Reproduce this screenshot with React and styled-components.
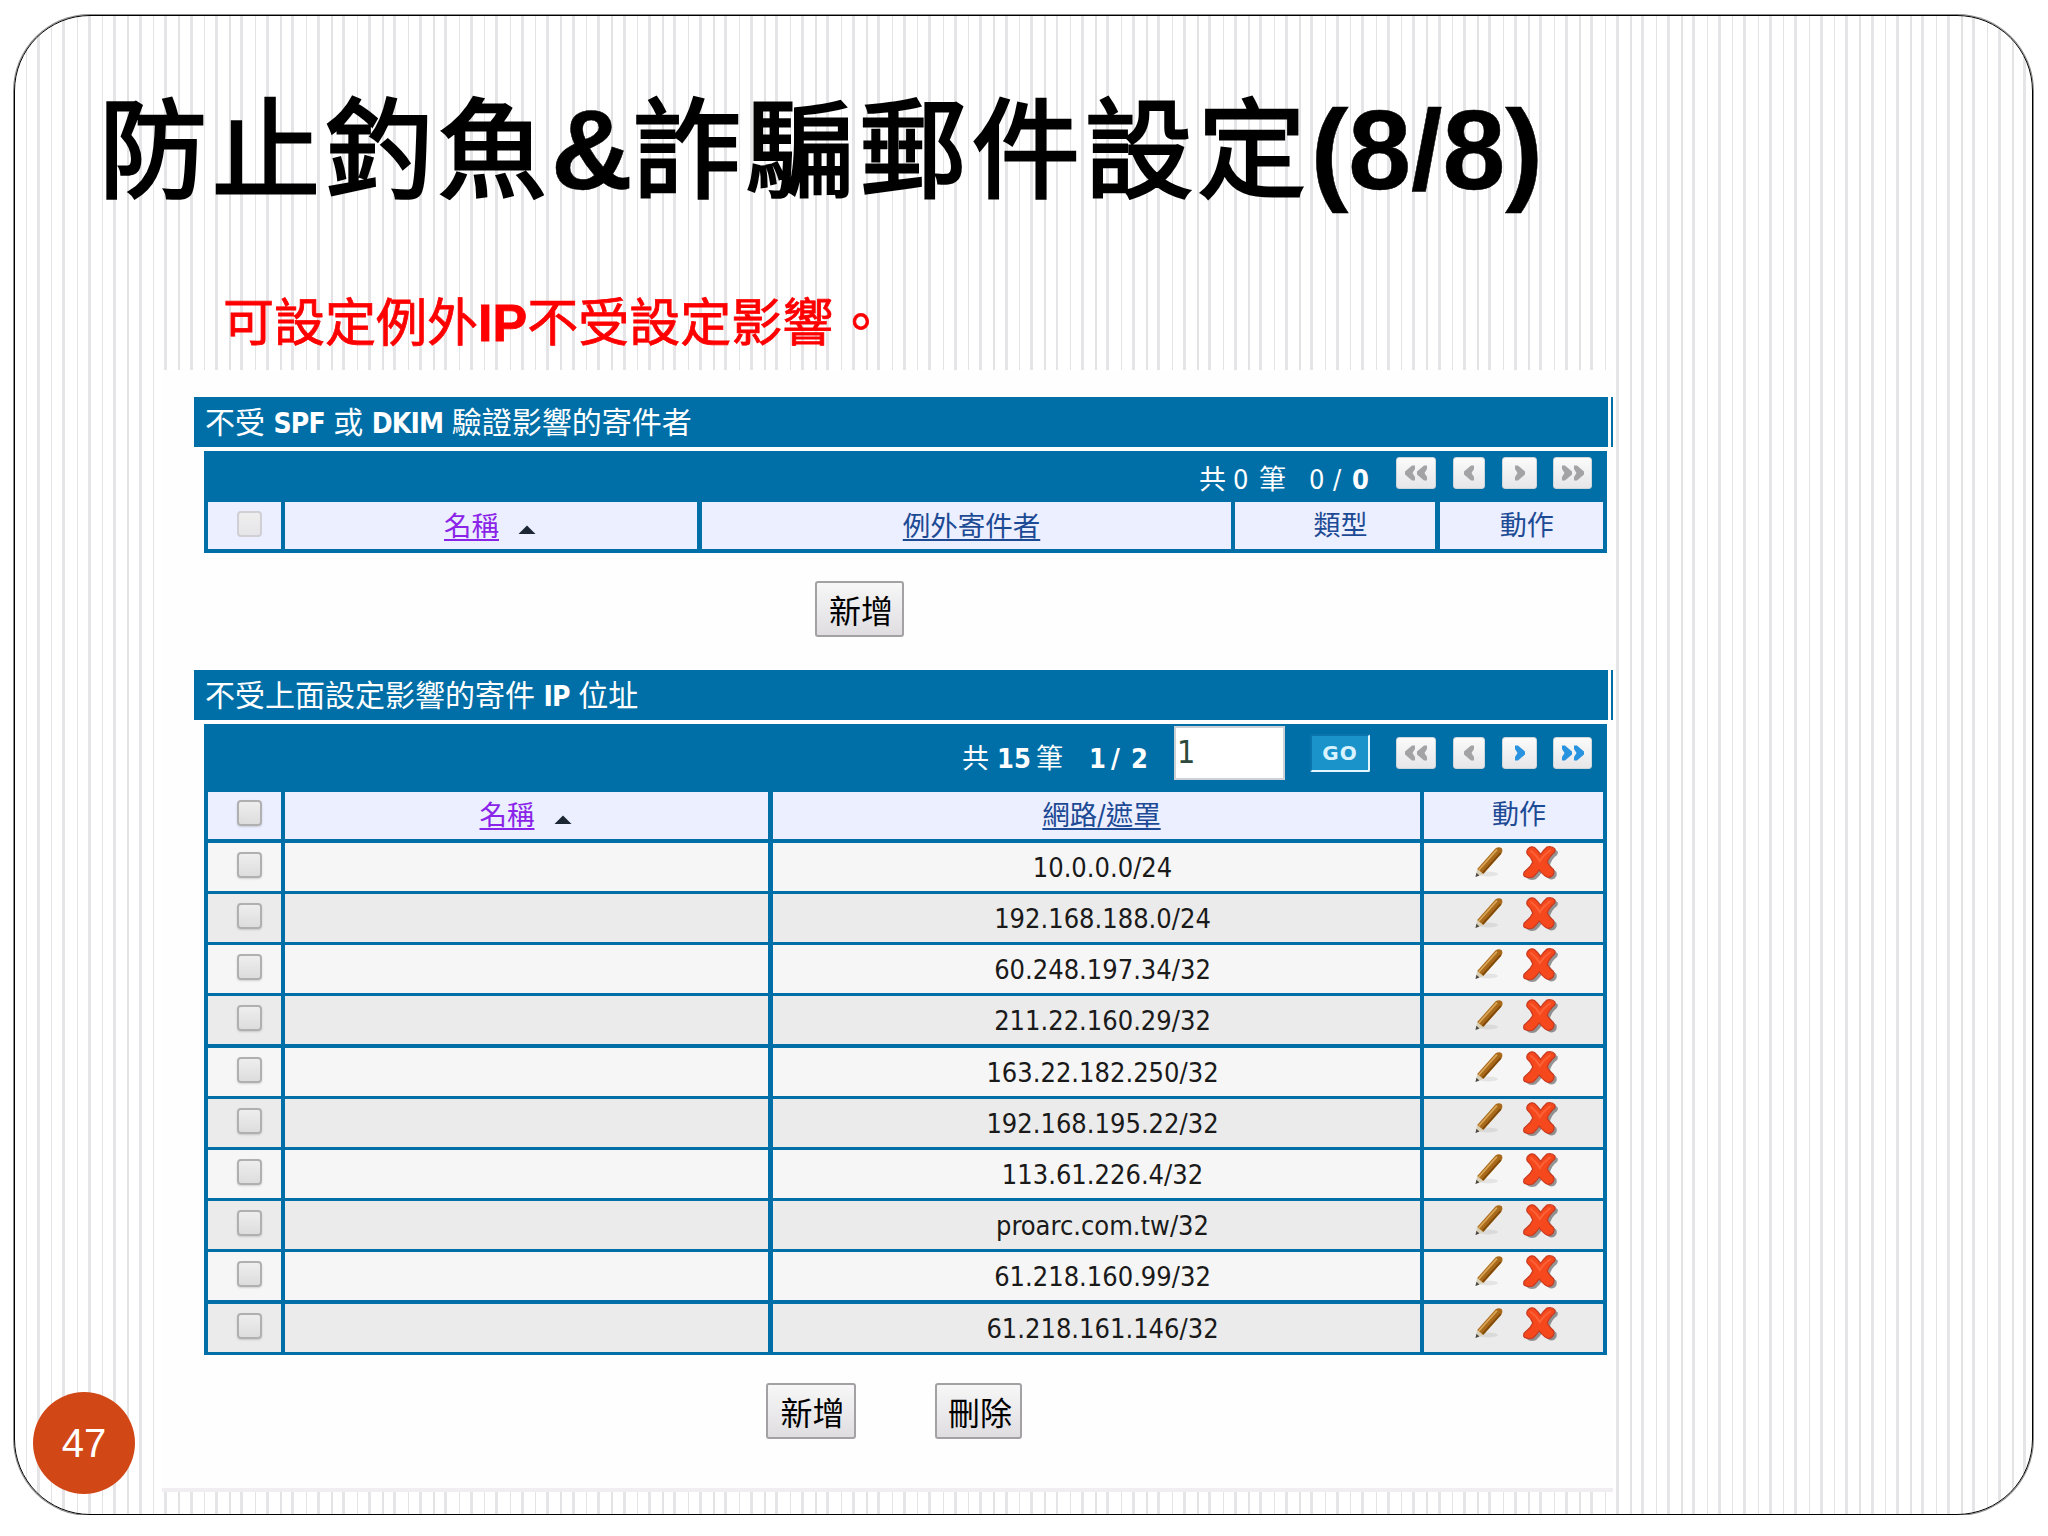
import React, { useState } from "react";
import styled, { createGlobalStyle } from "styled-components";

const GlobalStyle = createGlobalStyle`
  * {
    box-sizing: border-box;
  }
  body {
    margin: 0;
    background: #fff;
    font-family: "DejaVu Sans Condensed", "DejaVu Sans", "Noto Sans CJK TC", sans-serif;
    font-stretch: condensed;
  }
`;

const networks = [
  "10.0.0.0/24",
  "192.168.188.0/24",
  "60.248.197.34/32",
  "211.22.160.29/32",
  "163.22.182.250/32",
  "192.168.195.22/32",
  "113.61.226.4/32",
  "proarc.com.tw/32",
  "61.218.160.99/32",
  "61.218.161.146/32",
];

const PencilIcon = () => (
  <svg width="30" height="34" viewBox="0 0 30 34">
    <ellipse cx="14" cy="29" rx="10" ry="2.6" fill="#000" opacity="0.07" />
    <path d="M1.5 32 L3.2 24 L9.4 29 Z" fill="#d9cfb4" />
    <path d="M1.5 32 L2.4 27.8 L5.4 30.4 Z" fill="#4a4a4a" />
    <path d="M3.2 24 L21.4 3.6 Q25 0.8 28 3.6 Q29.4 6.4 27.2 9 L9.4 29 Z" fill="#a8691a" />
    <path d="M4.8 25 L23 4.6" stroke="#d9a556" strokeWidth="1.8" />
    <path d="M8.6 28 L26.6 8" stroke="#7c4708" strokeWidth="1.6" />
  </svg>
);

const crossPath =
  "M6 4 Q9 0.5 12.5 2.5 Q16 5.5 18.5 9.5 Q21.5 5 25 2 Q30.5 0.8 33 4.2 Q33.6 7.4 30 9.5 Q26.5 13 25.2 17.2 Q27.5 21.6 31.5 24.6 Q33 28.6 29.8 31.4 Q25.5 33.6 22.4 30.4 Q19.5 28 17.2 25 Q14.5 29 11 32 Q5.5 34 2 30.8 Q0.8 27.4 4.4 25 Q9 21.4 10.8 17 Q9 12.4 5.6 9.4 Q3.8 6.6 6 4 Z";

const CrossIcon = () => (
  <svg width="38" height="37" viewBox="0 0 38 37">
    <path d={crossPath} fill="#444" opacity="0.55" transform="translate(2.8 2.2)" />
    <path d={crossPath} fill="#f5481c" stroke="#c83a20" strokeWidth="1.2" />
    <path d="M9 6 Q14 9.5 17.8 16 Q22 9.5 28 5.5" fill="none" stroke="#fb6238" strokeWidth="2" strokeLinecap="round" />
  </svg>
);

const Chevrons = ({ double, back, color }) => (
  <svg width={double ? 24 : 12} height="16" viewBox={double ? "0 0 24 16" : "0 0 12 16"}>
    <g fill={color} transform={back ? `translate(${double ? 24 : 12} 0) scale(-1 1)` : undefined}>
      <path d="M1 0.5 L4 0.5 L11 6.5 L11 9.5 L4 15.5 L1 15.5 L1 12 L3.5 8 L1 4 Z" />
      {double && <path d="M13 0.5 L16 0.5 L23 6.5 L23 9.5 L16 15.5 L13 15.5 L13 12 L15.5 8 L13 4 Z" />}
    </g>
  </svg>
);

const PageButtons = ({ hasNext, top }) => {
  const next = hasNext ? "#2a93df" : "#a3a3a6";
  return (
    <NavGroup $top={top}>
      <NavButton $width={40}><Chevrons double back color="#a3a3a6" /></NavButton>
      <NavButton $width={32} $left={17}><Chevrons back color="#a3a3a6" /></NavButton>
      <NavButton $width={35} $left={17}><Chevrons color={next} /></NavButton>
      <NavButton $width={39} $left={16}><Chevrons double color={next} /></NavButton>
    </NavGroup>
  );
};

const SortArrow = () => (
  <Arrow width="18" height="9" viewBox="0 0 18 9">
    <path d="M0.5 9 L9 0.5 L17.5 9 Z" fill="#1c2733" />
  </Arrow>
);

const App = () => {
  const [page, setPage] = useState("1");

  return (
    <>
      <GlobalStyle />
      <Slide>
        <Title>
          防止釣魚<b>&amp;</b>詐騙郵件設定<b>(8/8)</b>
        </Title>
        <Subtitle>
          可設定例外<b>IP</b>不受設定影響<Stop>。</Stop>
        </Subtitle>

        <Panel>
          <SectionBar>
            <SectionTitle>
              不受 <b>SPF</b> 或 <b>DKIM</b> 驗證影響的寄件者
            </SectionTitle>
          </SectionBar>
          <Table>
            <Pager $height={51.5}>
              <PagerText $top={11}>
                <Piece $width={34}>共</Piece>
                <Piece $width={26}>0</Piece>
                <Piece $width={50}>筆</Piece>
                <Piece $width={24}>0</Piece>
                <Piece $width={19}>/</Piece>
                <Piece $width={44}><b>0</b></Piece>
              </PagerText>
              <PageButtons top={6} />
            </Pager>
            <Row $columns="72.5px 412px 529px 200px 1fr" $head>
              <Cell><Check type="checkbox" disabled /></Cell>
              <Cell $pull={13}><Link $visited>名稱</Link><SortArrow /></Cell>
              <Cell><Link>例外寄件者</Link></Cell>
              <Cell>類型</Cell>
              <Cell>動作</Cell>
            </Row>
          </Table>
          <Actions $indent={653}>
            <Button $width={89}>新增</Button>
          </Actions>

          <SectionBar>
            <SectionTitle>
              不受上面設定影響的寄件 <b>IP</b> 位址
            </SectionTitle>
          </SectionBar>
          <Table>
            <Pager $height={68}>
              <PagerText $top={17}>
                <Piece $width={35}>共</Piece>
                <Piece $width={39}><b>15</b></Piece>
                <Piece $width={53}>筆</Piece>
                <Piece $width={22}><b>1</b></Piece>
                <Piece $width={20}><b>/</b></Piece>
                <Piece $width={43}><b>2</b></Piece>
              </PagerText>
              <PageInput value={page} onChange={(e) => setPage(e.target.value)} />
              <GoButton>GO</GoButton>
              <PageButtons hasNext top={13} />
            </Pager>
            <Row $columns="72.5px 483px 647px 1fr" $head>
              <Cell><Check type="checkbox" /></Cell>
              <Cell $pull={13}><Link $visited>名稱</Link><SortArrow /></Cell>
              <Cell><Link>網路/遮罩</Link></Cell>
              <Cell>動作</Cell>
            </Row>
            {networks.map((network, i) => (
              <Row key={network} $columns="72.5px 483px 647px 1fr" $odd={i % 2 === 1}>
                <Cell><Check type="checkbox" /></Cell>
                <Cell />
                <Cell $push={2} $drop={2}>{network}</Cell>
                <Cell>
                  <Icons>
                    <PencilIcon />
                    <CrossIcon />
                  </Icons>
                </Cell>
              </Row>
            ))}
          </Table>
          <Actions $indent={604}>
            <Button $width={90}>新增</Button>
            <Button $width={87}>刪除</Button>
          </Actions>
        </Panel>

        <PageNumber>47</PageNumber>
      </Slide>
    </>
  );
};

const blue = "#006fa7";

const Slide = styled.main`
  position: relative;
  width: 2019px;
  height: 1500px;
  margin: 15px 0 0 14px;
  border: 1px solid #000;
  border-radius: 76px;
  box-shadow: 0 0 0 1px rgba(0, 0, 0, 0.45);
  overflow: hidden;
  background: repeating-linear-gradient(
    90deg,
    transparent 0 10.6px,
    #e3e2e4 10.6px 12px,
    transparent 12px 21.7px,
    #e5e4e6 21.7px 24.7px,
    transparent 24.7px 25.47px
  );
`;

const Title = styled.h1`
  margin: 0;
  padding: 57px 0 0 84px;
  height: 254px;
  font-family: "Liberation Sans", "Noto Sans CJK TC", sans-serif;
  font-stretch: normal;
  font-size: 108px;
  font-weight: 400;
  line-height: 154px;
  letter-spacing: 5px;
  white-space: nowrap;
  color: #000;
  -webkit-text-stroke: 3px #000;
  b {
    font-size: 113px;
    font-weight: 700;
    letter-spacing: 0;
    -webkit-text-stroke: 0.5px #000;
  }
`;

const Subtitle = styled.p`
  margin: 0;
  padding: 17px 0 0 208px;
  height: 100px;
  font-family: "Liberation Sans", "Noto Sans CJK TC", sans-serif;
  font-stretch: normal;
  font-size: 51px;
  line-height: 72px;
  white-space: nowrap;
  color: #fe0000;
  -webkit-text-stroke: 0.8px #fe0000;
  b {
    font-size: 52px;
  }
`;

const Stop = styled.span`
  margin-left: 2px;
`;

const Panel = styled.section`
  width: 1451px;
  height: 1122px;
  margin-left: 147px;
  padding: 27px 0 0 32px;
  background: #fefefe;
  border-bottom: 4px solid #f0eef1;
`;

const SectionBar = styled.div`
  display: flex;
  justify-content: space-between;
  width: 1419px;
  height: 49.5px;
  border-right: 2px solid ${blue};
  padding-right: 3px;
`;

const SectionTitle = styled.h2`
  flex: 1;
  margin: 0;
  padding-left: 11px;
  background: ${blue};
  color: #fff;
  font-size: 30px;
  font-weight: 400;
  line-height: 52px;
  white-space: nowrap;
  b {
    font-size: 28px;
    letter-spacing: -0.9px;
  }
`;

const Table = styled.div`
  display: flex;
  flex-direction: column;
  gap: 4px;
  width: 1403px;
  margin: 4px 0 0 10px;
  padding: 0 4px 4px;
  background: ${blue};
`;

const Pager = styled.div`
  display: flex;
  justify-content: flex-end;
  height: ${({ $height }) => $height - 4}px;
  padding-right: 11px;
  color: #fff;
  font-size: 27px;
`;

const PagerText = styled.div`
  display: flex;
  padding-top: ${({ $top }) => $top}px;
  line-height: 36px;
`;

const Piece = styled.span`
  width: ${({ $width }) => $width}px;
  white-space: nowrap;
`;

const NavGroup = styled.div`
  display: flex;
  padding-top: ${({ $top }) => $top}px;
`;

const NavButton = styled.button`
  display: flex;
  align-items: center;
  justify-content: center;
  width: ${({ $width }) => $width}px;
  height: 32px;
  margin-left: ${({ $left }) => $left || 0}px;
  padding: 0;
  border: 1px solid #cfd6da;
  border-radius: 3px;
  background: linear-gradient(#fbfbfb, #e6e5e8);
`;

const PageInput = styled.input`
  width: 111px;
  height: 54px;
  margin: 2px 25px 0 0;
  padding: 0 1px 1px;
  border: 2px solid #cdd0d4;
  background: #fff;
  color: #2d4a3c;
  font-family: "DejaVu Sans Condensed", "DejaVu Sans", sans-serif;
  font-stretch: condensed;
  font-size: 32px;
`;

const GoButton = styled.button`
  width: 60px;
  height: 38px;
  margin: 10px 26px 0 0;
  padding: 0;
  border: 2px solid #e6f6ff;
  border-top-color: #0a75ad;
  border-left-color: #0a75ad;
  border-radius: 2px;
  background: #1a93cb;
  color: #d8f3ff;
  font-family: "DejaVu Sans", sans-serif;
  font-stretch: normal;
  font-size: 20px;
  font-weight: 700;
  line-height: 30px;
  letter-spacing: 1px;
`;

const Row = styled.div`
  display: grid;
  grid-template-columns: ${({ $columns }) => $columns};
  column-gap: 4.5px;
  height: 47.2px;
  color: ${({ $head }) => ($head ? "#1d4a94" : "#1a1a1a")};
  font-size: 27px;

  > div {
    background: ${({ $head, $odd }) => ($head ? "#ebefff" : $odd ? "#ebebeb" : "#f6f6f6")};
  }
`;

const Cell = styled.div`
  display: flex;
  align-items: center;
  justify-content: center;
  gap: 19px;
  padding-top: ${({ $drop }) => $drop || 0}px;
  padding-left: ${({ $push }) => 11 + ($push || 0)}px;
  padding-right: ${({ $pull }) => $pull || 0}px;
  line-height: 46px;
  white-space: nowrap;
`;

const Link = styled.a`
  color: ${({ $visited }) => ($visited ? "#8a24e8" : "#1d4a94")};
  font-size: 27.5px;
  text-decoration: underline;
  text-decoration-thickness: 2px;
  text-underline-offset: 3px;
  text-decoration-skip-ink: none;
`;

const Arrow = styled.svg`
  margin-top: 8px;
`;

const Check = styled.input`
  appearance: none;
  width: 25px;
  height: 26px;
  margin: 0 0 4px;
  border: 2px solid #b0b0b0;
  border-radius: 4px;
  background: linear-gradient(#eeeeee, #dddddd);
  box-shadow: 0 1px 2px rgba(0, 0, 0, 0.15);
  &:disabled {
    border-color: #cfcfd4;
    background: linear-gradient(#eeeeee, #e6e6ea);
    box-shadow: none;
  }
`;

const Icons = styled.div`
  display: flex;
  gap: 18px;
  height: 40px;
  margin: 0 4px 4px 0;
`;

const Actions = styled.div`
  display: flex;
  gap: 79px;
  height: 117px;
  padding: 28px 0 0 ${({ $indent }) => $indent - 32}px;
`;

const Button = styled.button`
  width: ${({ $width }) => $width}px;
  height: 56px;
  padding: 0 0 0 3px;
  border: 2px solid #a3a1a4;
  border-radius: 3px;
  background: linear-gradient(#f8f7f8, #dfdde0);
  color: #000;
  font-family: "Noto Sans CJK TC", sans-serif;
  font-size: 32px;
  line-height: 50px;
`;

const PageNumber = styled.div`
  position: absolute;
  left: 18px;
  bottom: 20px;
  width: 102px;
  height: 102px;
  border-radius: 50%;
  background: #d24716;
  color: #fff;
  font-family: "Liberation Sans", sans-serif;
  font-stretch: normal;
  font-size: 40px;
  line-height: 102px;
  text-align: center;
`;

export default App;
